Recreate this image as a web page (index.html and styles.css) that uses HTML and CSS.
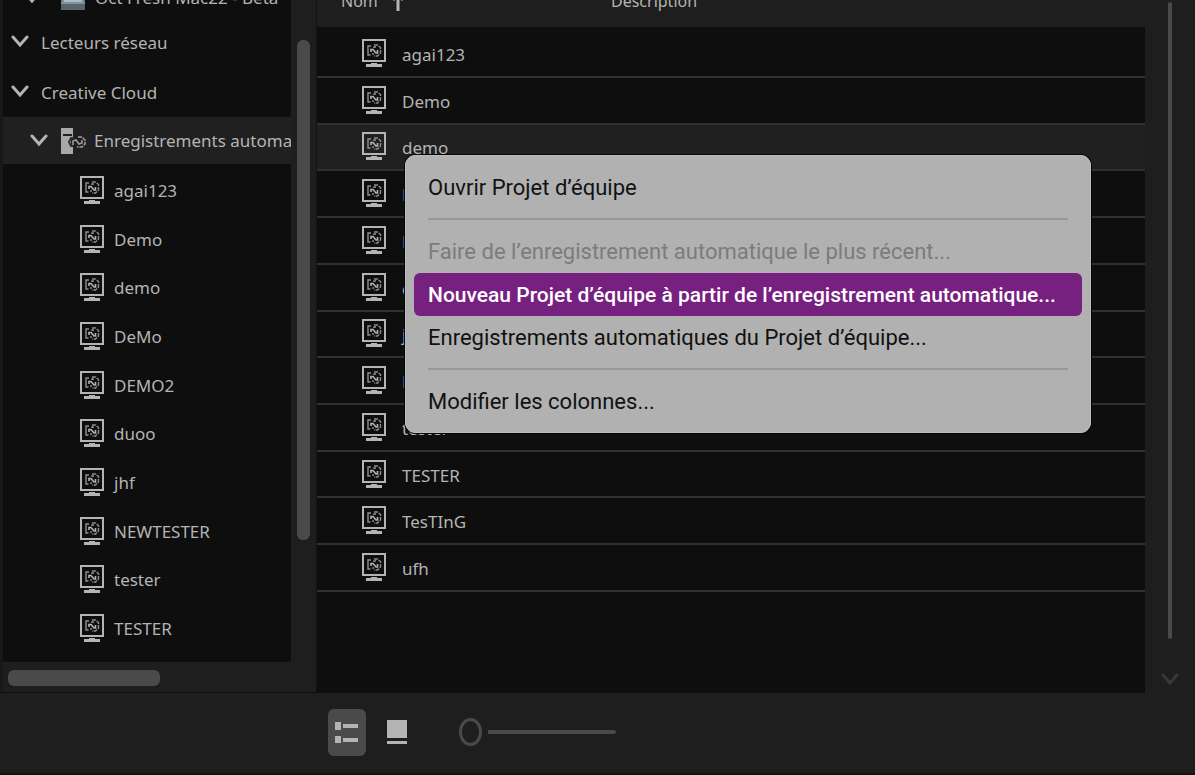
FILE: index.html
```html
<!DOCTYPE html>
<html lang="fr">
<head>
  <meta charset="UTF-8">
  <title>Explorateur de médias</title>
  <link rel="stylesheet" href="styles.css">
</head>
<body>

  <svg class="sprite" aria-hidden="true">
    <symbol id="chevron" viewBox="0 0 18 14">
      <path d="M2 2 L9 10 L16 2" fill="none" stroke="currentColor" stroke-width="3" stroke-linecap="round"/>
    </symbol>
    <symbol id="ecran" viewBox="0 0 24 29">
      <rect x="1" y="1" width="22" height="21" fill="none" stroke="#b4b4b4" stroke-width="2"/>
      <path d="M9 24h6v1h5v3H4v-3h5z" fill="#b4b4b4"/>
      <g fill="none" stroke="#8f8f8f" stroke-width="1.400">
        <path d="M9 7H6V16H8.500"/>
        <path d="M12 6H15.500L18.500 8.500V14L15.500 17H12" stroke-dasharray="4 1"/>
        <path d="M9 13V10.500H11L14 14H15.500V11" stroke="#b4b4b4" stroke-width="1.600"/>
        <path d="M12 9V8H14M11 14V16"/>
      </g>
    </symbol>
    <symbol id="serveur" viewBox="0 0 26 28">
      <path d="M1 1h12v9h-2v9h2v8H1z" fill="#a8a8a8"/>
      <path d="M3 8h9" stroke="#202020" stroke-width="2"/>
      <g fill="none" stroke="#a0a0a0" stroke-width="1.500">
        <path d="M14 11h-3l-2 4 2 4h2" stroke="#303030" stroke-width="2"/>
        <path d="M18 10h4l3 3v4l-3 3h-5" stroke-dasharray="4 1"/>
        <path d="M13 18v-4l3-1 3 4 3-1v-3"/>
      </g>
    </symbol>
  </svg>

  <main class="panneaux">
    <nav class="dossiers" aria-label="Dossiers">
      <div class="arbre">
        <div class="noeud disque">
          <button class="plier" aria-label="Replier"><svg><use href="#chevron"/></svg></button>
          <svg class="icone-disque" viewBox="0 0 24 24"><path d="M2 0h20l2 17v7H0v-7z" fill="#7f919b"/><path d="M0 18h24v6H0z" fill="#5a656b"/><path d="M3 4h17l1 12H3z" fill="#aebdc5"/></svg>
          <span>Oct Fresh Mac22 - Beta</span>
        </div>
        <div class="noeud">
          <button class="plier" aria-label="Replier"><svg><use href="#chevron"/></svg></button>
          <span>Lecteurs réseau</span>
        </div>
        <div class="noeud">
          <button class="plier" aria-label="Replier"><svg><use href="#chevron"/></svg></button>
          <span>Creative Cloud</span>
        </div>
        <div class="noeud actif">
          <button class="plier" aria-label="Replier"><svg><use href="#chevron"/></svg></button>
          <svg class="icone-serveur"><use href="#serveur"/></svg>
          <span>Enregistrements automatiques</span>
        </div>
        <ul class="projets">
          <li><svg class="ecran"><use href="#ecran"/></svg>agai123</li>
          <li><svg class="ecran"><use href="#ecran"/></svg>Demo</li>
          <li><svg class="ecran"><use href="#ecran"/></svg>demo</li>
          <li><svg class="ecran"><use href="#ecran"/></svg>DeMo</li>
          <li><svg class="ecran"><use href="#ecran"/></svg>DEMO2</li>
          <li><svg class="ecran"><use href="#ecran"/></svg>duoo</li>
          <li><svg class="ecran"><use href="#ecran"/></svg>jhf</li>
          <li><svg class="ecran"><use href="#ecran"/></svg>NEWTESTER</li>
          <li><svg class="ecran"><use href="#ecran"/></svg>tester</li>
          <li><svg class="ecran"><use href="#ecran"/></svg>TESTER</li>
        </ul>
      </div>
      <div class="defil-v"><div class="curseur"></div></div>
      <div class="defil-h"><div class="curseur"></div></div>
    </nav>

    <section class="contenu">
      <table class="liste">
        <thead>
          <tr>
            <th class="nom">Nom <svg class="tri" viewBox="0 0 12 18"><path d="M6 18V3M1 7l5-5 5 5" fill="none" stroke="#b4b4b4" stroke-width="3"/></svg></th>
            <th>Description</th>
          </tr>
        </thead>
        <tbody>
          <tr><td><svg class="ecran"><use href="#ecran"/></svg>agai123</td><td></td></tr>
          <tr><td><svg class="ecran"><use href="#ecran"/></svg>Demo</td><td></td></tr>
          <tr class="actif"><td><svg class="ecran"><use href="#ecran"/></svg>demo</td><td></td></tr>
          <tr><td><svg class="ecran"><use href="#ecran"/></svg>DeMo</td><td></td></tr>
          <tr><td><svg class="ecran"><use href="#ecran"/></svg>DEMO2</td><td></td></tr>
          <tr><td><svg class="ecran"><use href="#ecran"/></svg>duoo</td><td></td></tr>
          <tr><td><svg class="ecran"><use href="#ecran"/></svg>jhf</td><td></td></tr>
          <tr><td><svg class="ecran"><use href="#ecran"/></svg>NEWTESTER</td><td></td></tr>
          <tr><td><svg class="ecran"><use href="#ecran"/></svg>tester</td><td></td></tr>
          <tr><td><svg class="ecran"><use href="#ecran"/></svg>TESTER</td><td></td></tr>
          <tr><td><svg class="ecran"><use href="#ecran"/></svg>TesTInG</td><td></td></tr>
          <tr><td><svg class="ecran"><use href="#ecran"/></svg>ufh</td><td></td></tr>
        </tbody>
      </table>
    </section>

    <div class="defil-page">
      <div class="curseur"></div>
      <button class="plier" aria-label="Défiler vers le bas"><svg><use href="#chevron"/></svg></button>
    </div>
  </main>

  <footer class="barre">
    <button class="vue actif" aria-label="Liste">
      <svg viewBox="0 0 24 24"><path d="M0 2h6v8H0zM8 4h15v4H8zM0 16h6v7H0zM8 18h15v4H8z" fill="#b4b4b4"/></svg>
    </button>
    <button class="vue" aria-label="Vignettes">
      <svg viewBox="0 0 24 24"><path d="M2 0h20v18H2zM2 21h20v3H2z" fill="#b4b4b4"/></svg>
    </button>
    <input class="zoom" type="range" min="0" max="100" value="0" aria-label="Taille des vignettes">
  </footer>

  <div class="menu" role="menu">
    <button role="menuitem">Ouvrir Projet d’équipe</button>
    <hr>
    <button role="menuitem" disabled>Faire de l’enregistrement automatique le plus récent...</button>
    <button role="menuitem" class="choisi">Nouveau Projet d’équipe à partir de l’enregistrement automatique...</button>
    <button role="menuitem">Enregistrements automatiques du Projet d’équipe...</button>
    <hr>
    <button role="menuitem">Modifier les colonnes...</button>
  </div>

</body>
</html>
```
FILE: styles.css
```css
* {
  box-sizing: border-box;
}

body {
  margin: 0;
  min-height: 100vh;
  overflow: hidden;
  display: flex;
  flex-direction: column;
  background-color: #1e1e1e;
  border-bottom: 2px solid #121212;
  color: #b4b4b4;
  font-family: "Noto Sans", sans-serif;
  font-size: 17px;
}

button {
  padding: 0;
  border: none;
  background: none;
  color: inherit;
  font: inherit;
}

.sprite {
  display: none;
}

/* la vue est défilée : le haut des panneaux sort de la fenêtre */
.panneaux {
  display: grid;
  grid-template-columns: 316px 1fr 50px;
  margin-top: -30px;
}

.dossiers {
  display: grid;
  grid-template-columns: 1fr 25px;
  grid-template-rows: 1fr 30px;
  border-left: 3px solid #181818;
  border-bottom: 1px solid #101010;
}

.arbre {
  min-width: 0;
  overflow: hidden;
  padding-bottom: 9px;
  background-color: #0e0e0e;
  white-space: nowrap;
}

.noeud {
  display: flex;
  align-items: center;
  height: 50px;
  padding-left: 8px;
}

.noeud.disque {
  height: 47px;
  padding: 8px 0 0 20px;
}

.noeud.actif {
  height: 47px;
  padding-left: 27px;
  background-color: #202020;
}

.plier {
  display: flex;
  margin-right: 12px;
}

.plier svg {
  width: 18px;
  height: 14px;
}

.icone-disque {
  width: 24px;
  height: 24px;
  margin: 0 10px 0 8px;
}

.icone-serveur {
  flex: none;
  width: 26px;
  height: 28px;
  margin-right: 8px;
}

.projets {
  display: grid;
  grid-auto-rows: 1fr;
  height: 487px;
  margin: 2px 0 0;
  padding: 0 0 0 77px;
  list-style: none;
}

.projets li {
  display: flex;
  align-items: center;
}

.ecran {
  width: 24px;
  height: 29px;
  margin-right: 10px;
}

.defil-v {
  padding: 70px 6px 0;
}

.defil-v .curseur {
  height: 500px;
  border-radius: 6px;
  background-color: #4a4a4a;
}

.defil-h {
  grid-column: 1 / -1;
  padding: 8px 5px;
}

.defil-h .curseur {
  width: 152px;
  height: 16px;
  border-radius: 6px;
  background-color: #4a4a4a;
}

.contenu {
  border-left: 1px solid #121212;
  background-color: #0e0e0e;
}

.liste {
  width: 100%;
  height: 622px;
  border-collapse: collapse;
}

.liste th {
  height: 59px;
  padding: 4px 0 0;
  border-bottom: 4px solid #0e0e0e;
  background-color: #1e1e1e;
  font-size: 16px;
  font-weight: normal;
  text-align: left;
}

.liste .nom {
  width: 294px;
  padding-left: 24px;
}

.tri {
  width: 12px;
  height: 18px;
  margin-left: 10px;
  vertical-align: middle;
}

.liste td {
  padding: 5px 0 0 45px;
  border-bottom: 2px solid #303030;
}

.liste td .ecran {
  margin: 0 16px 5px 0;
  vertical-align: middle;
}

.liste .actif {
  background-color: #202020;
}

.defil-page {
  display: flex;
  flex-direction: column;
  align-items: center;
  padding-top: 32px;
  color: #383838;
}

.defil-page .curseur {
  width: 4px;
  height: 637px;
  border-radius: 2px;
  background-color: #4a4a4a;
}

.defil-page .plier {
  margin: 34px 0 0;
}

.barre {
  flex: 1;
  display: flex;
  align-items: center;
  gap: 12px;
  padding: 0 0 2px 328px;
}

.vue {
  display: flex;
  align-items: center;
  justify-content: center;
  width: 38px;
  height: 47px;
  border-radius: 6px;
}

.vue.actif {
  background-color: #4a4a4a;
}

.vue svg {
  width: 24px;
  height: 24px;
}

.zoom {
  appearance: none;
  width: 157px;
  height: 28px;
  margin: 0 0 0 31px;
  background: none;
}

.zoom::-webkit-slider-runnable-track {
  height: 4px;
  border-radius: 2px;
  background: linear-gradient(to right, transparent 29px, #4a4a4a 29px);
}

.zoom::-webkit-slider-thumb {
  appearance: none;
  width: 23px;
  height: 28px;
  margin-top: -12px;
  border: 3px solid #4a4a4a;
  border-radius: 50%;
  background-color: #1e1e1e;
}

.menu {
  position: absolute;
  left: 405px;
  top: 155px;
  width: 686px;
  padding: 11px 9px 10px;
  border-radius: 11px;
  background-color: #b1b1b1;
  box-shadow: 0 0 0 1px #060606, inset 0 0 0 1px #bdbdbd;
  color: #111;
  font-family: Roboto, sans-serif;
  font-size: 22px;
}

.menu button {
  display: block;
  width: 100%;
  height: 43px;
  padding: 0 14px;
  border-radius: 6px;
  text-align: left;
  white-space: nowrap;
}

.menu button:disabled {
  color: #7c7c7c;
}

.menu .choisi {
  background-color: #76207f;
  color: #fff;
  font-size: 21px;
  font-weight: 500;
}

.menu hr {
  height: 2px;
  margin: 9px 14px 10px;
  border: none;
  background-color: #989898;
}
```
